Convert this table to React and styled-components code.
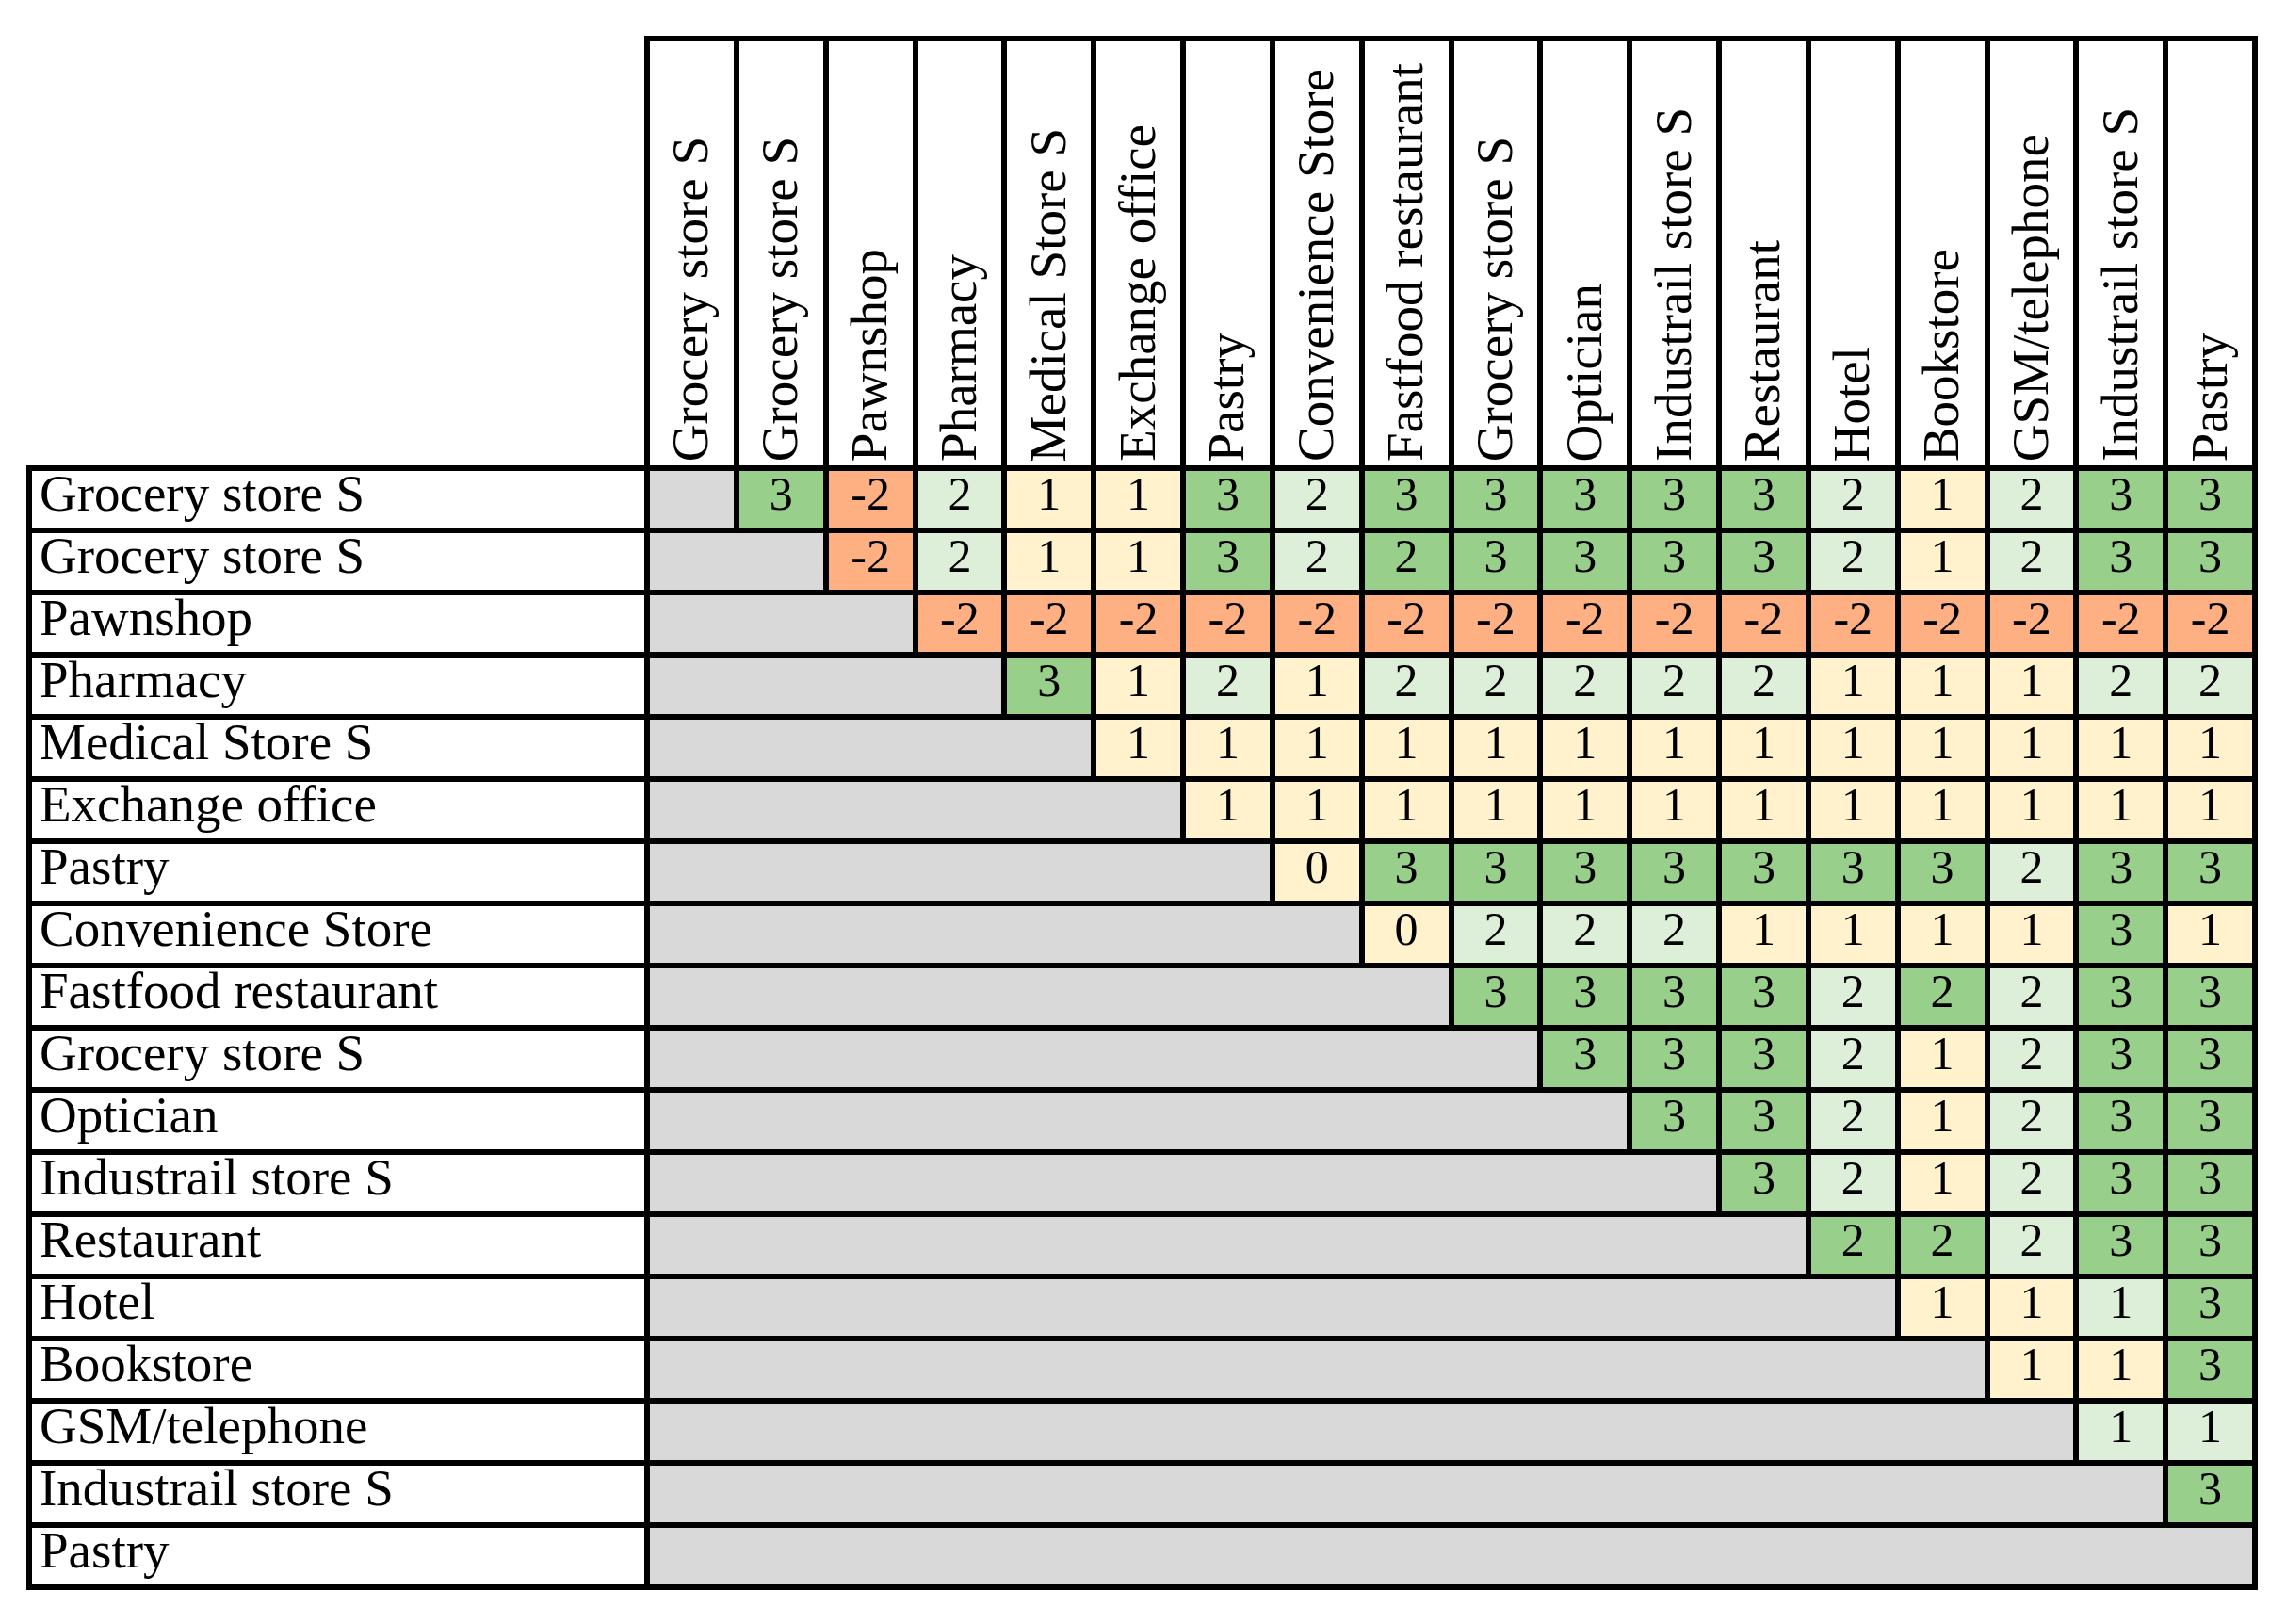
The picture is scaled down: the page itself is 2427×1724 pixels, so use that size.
import React from 'react';
import styled, { createGlobalStyle } from 'styled-components';

const GlobalStyle = createGlobalStyle`
  *, *::before, *::after { box-sizing: border-box; }
  html, body {
    margin: 0;
    padding: 0;
    background: #fff;
  }
  body {
    font-family: 'Liberation Serif', 'Times New Roman', serif;
    color: #000;
  }
`;

const FILLS = {
  D: '#98cf8a', // strong green
  L: '#ddefd9', // pale green
  Y: '#fff2cc', // pale yellow
  O: '#feb083', // orange
};

const LABELS = [
  'Grocery store S',
  'Grocery store S',
  'Pawnshop',
  'Pharmacy',
  'Medical Store S',
  'Exchange office',
  'Pastry',
  'Convenience Store',
  'Fastfood restaurant',
  'Grocery store S',
  'Optician',
  'Industrail store S',
  'Restaurant',
  'Hotel',
  'Bookstore',
  'GSM/telephone',
  'Industrail store S',
  'Pastry',
];

// values right of the diagonal, value + fill code
const ROWS = [
  '3D -2O 2L 1Y 1Y 3D 2L 3D 3D 3D 3D 3D 2L 1Y 2L 3D 3D',
  '-2O 2L 1Y 1Y 3D 2L 2D 3D 3D 3D 3D 2L 1Y 2L 3D 3D',
  '-2O -2O -2O -2O -2O -2O -2O -2O -2O -2O -2O -2O -2O -2O -2O',
  '3D 1Y 2L 1Y 2L 2L 2L 2L 2L 1Y 1Y 1Y 2L 2L',
  '1Y 1Y 1Y 1Y 1Y 1Y 1Y 1Y 1Y 1Y 1Y 1Y 1Y',
  '1Y 1Y 1Y 1Y 1Y 1Y 1Y 1Y 1Y 1Y 1Y 1Y',
  '0Y 3D 3D 3D 3D 3D 3D 3D 2L 3D 3D',
  '0Y 2L 2L 2L 1Y 1Y 1Y 1Y 3D 1Y',
  '3D 3D 3D 3D 2L 2D 2L 3D 3D',
  '3D 3D 3D 2L 1Y 2L 3D 3D',
  '3D 3D 2L 1Y 2L 3D 3D',
  '3D 2L 1Y 2L 3D 3D',
  '2D 2D 2L 3D 3D',
  '1Y 1Y 1L 3D',
  '1Y 1Y 3D',
  '1L 1L',
  '3D',
  '',
].map((row) =>
  row
    .split(' ')
    .filter(Boolean)
    .map((t) => ({ value: t.slice(0, -1), fill: t.slice(-1) }))
);

const Page = styled.div`
  width: 2427px;
  height: 1724px;
  padding: 38px 0 0 28px;
  background: #fff;
`;

const Matrix = styled.div`
  width: 2369px;
  display: flex;
  flex-direction: column;
`;

const HeaderRow = styled.div`
  display: grid;
  grid-template-columns: repeat(18, 1fr);
  gap: 6px;
  height: 456px;
  margin-left: 656px;
  padding: 6px 6px 0;
  background: #000;
`;

const HeaderCell = styled.div`
  display: flex;
  align-items: flex-end;
  justify-content: center;
  padding-bottom: 4px;
  background: #fff;
`;

const HeaderText = styled.span`
  writing-mode: vertical-rl;
  transform: translateX(-1px) rotate(180deg);
  font-size: 55px;
  line-height: 60px;
  white-space: nowrap;
`;

const Body = styled.div`
  display: grid;
  grid-template-columns: 650px repeat(18, 1fr);
  grid-auto-rows: 60px;
  gap: 6px;
  padding: 6px;
  background: #000;
`;

const RowLabel = styled.div`
  padding-left: 8px;
  background: #fff;
  font-size: 55px;
  line-height: 47px;
  white-space: nowrap;
`;

const Blank = styled.div`
  grid-column: span ${(p) => p.$span};
  background: #d9d9d9;
`;

const Score = styled.div`
  background: ${(p) => FILLS[p.$fill]};
  font-size: 50px;
  line-height: 48px;
  text-align: center;
`;

export default function App() {
  return (
    <>
      <GlobalStyle />
      <Page>
        <Matrix>
          <HeaderRow>
            {LABELS.map((label, i) => (
              <HeaderCell key={i}>
                <HeaderText>{label}</HeaderText>
              </HeaderCell>
            ))}
          </HeaderRow>
          <Body>
            {LABELS.map((label, r) => (
              <React.Fragment key={r}>
                <RowLabel>{label}</RowLabel>
                <Blank $span={r + 1} />
                {ROWS[r].map((cell, c) => (
                  <Score key={c} $fill={cell.fill}>
                    {cell.value}
                  </Score>
                ))}
              </React.Fragment>
            ))}
          </Body>
        </Matrix>
      </Page>
    </>
  );
}
